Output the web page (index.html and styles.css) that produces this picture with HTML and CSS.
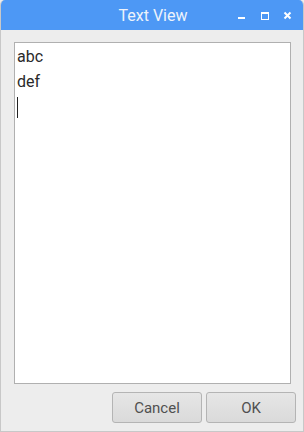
FILE: index.html
```html
<!DOCTYPE html>
<html>
<head>
<meta charset="utf-8">
<link rel="stylesheet" href="styles.css">
</head>
<body>
<div class="window">
  <div class="titlebar">
    <span class="title">Text View</span>
    <div class="controls">
      <svg class="ctl" width="9" height="9" viewBox="0 0 9 9"><rect x="1" y="6" width="7" height="2" fill="#fff"/></svg>
      <svg class="ctl" width="9" height="9" viewBox="0 0 9 9"><rect x="1.5" y="1.5" width="7" height="7" fill="none" stroke="#fff" stroke-width="1"/><rect x="1" y="1" width="8" height="2" fill="#fff"/></svg>
      <svg class="ctl" width="9" height="9" viewBox="0 0 9 9"><path d="M1.5 1.5 L7.5 7.5 M7.5 1.5 L1.5 7.5" stroke="#fff" stroke-width="2"/></svg>
    </div>
  </div>
  <div class="content">
    <div class="textview">
      <div class="line">abc</div>
      <div class="line">def</div>
      <div class="line"><span class="cursor"></span></div>
    </div>
    <div class="buttons">
      <button class="btn">Cancel</button>
      <button class="btn">OK</button>
    </div>
  </div>
</div>
</body>
</html>
```
FILE: styles.css
```css
html, body {
  margin: 0;
  padding: 0;
  background: #ededed;
}
.window {
  width: 304px;
  height: 432px;
  box-sizing: border-box;
  background: #ededed;
  border: 1px solid #c8c8c8;
  border-top: none;
  border-radius: 5px 5px 0 0;
  overflow: hidden;
  display: flex;
  flex-direction: column;
  font-family: Roboto, "Liberation Sans", sans-serif;
  position: relative;
}
.titlebar {
  height: 30px;
  background: #4d98f5;
  margin: 0 -1px;
  position: relative;
  display: flex;
  align-items: center;
  justify-content: center;
}
.title {
  color: #eef3fb;
  font-size: 16px;
  margin-left: 2px;
  margin-top: 1px;
}
.controls {
  position: absolute;
  right: 12px;
  top: 11px;
  display: flex;
  gap: 14px;
}
.ctl {
  display: block;
}
.content {
  flex: 1;
  display: flex;
  flex-direction: column;
  padding: 12px 12px 8px 13px;
}
.textview {
  height: 342px;
  box-sizing: border-box;
  background: #fff;
  border: 1px solid #b0b0b0;
  padding: 1px 2px;
}
.line {
  height: 25px;
  line-height: 25px;
  font-size: 16px;
  color: #2a2a2a;
}
.cursor {
  display: inline-block;
  width: 1px;
  height: 21px;
  background: #222;
  vertical-align: middle;
}
.buttons {
  display: flex;
  justify-content: flex-end;
  gap: 4px;
  margin-top: 8px;
  margin-right: -5px;
}
.btn {
  width: 90px;
  height: 31px;
  border: 1px solid #b4b4b4;
  border-radius: 3px;
  background: linear-gradient(#e6e6e6, #dadada);
  font-family: Roboto, "Liberation Sans", sans-serif;
  font-size: 15px;
  color: #505050;
  padding: 0;
}
```
